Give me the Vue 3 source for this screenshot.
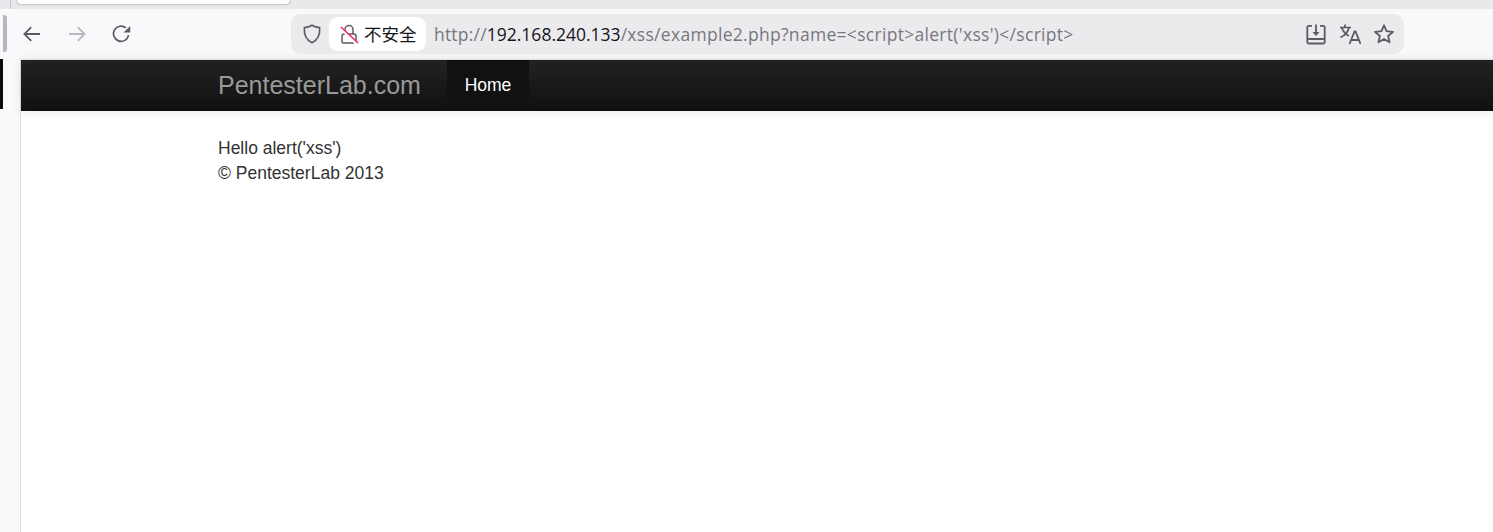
<script setup>
const urlHost = '192.168.240.133'
const urlPath = "/xss/example2.php?name=<script>alert('xss')</" + "script>"
</script>

<template>
  <div class="window">
    <div class="tabstrip">
      <span class="tab-sep"></span>
      <div class="tab"></div>
    </div>
    <header class="toolbar">
      <span class="handle"></span>
      <nav class="nav-buttons">
        <svg class="ico" viewBox="0 0 20 20" width="20" height="20"><path d="M18 10H2.6M9.2 3.2 2.4 10l6.8 6.8" fill="none" stroke="#5b5b66" stroke-width="1.8"/></svg>
        <svg class="ico" viewBox="0 0 20 20" width="20" height="20"><path d="M2 10h15.4M10.8 3.2l6.8 6.8-6.8 6.8" fill="none" stroke="#b9b9be" stroke-width="1.8"/></svg>
        <svg class="ico" viewBox="0 0 20 20" width="20" height="20"><path d="M16.6 11.2A7.6 7.6 0 1 1 14 3.9" fill="none" stroke="#5b5b66" stroke-width="1.7"/><path d="M18.2 2v6.6h-6.6z" fill="#5b5b66"/></svg>
      </nav>
      <div class="urlbar">
        <svg class="shield" viewBox="0 0 20 20" width="20" height="20"><path d="M10 1.3c2.4 1.5 4.800 2.100 7.600 2.300.6 7.400-1.800 12.300-7.600 15.100C4.200 15.900 1.800 11 2.400 3.600 5.200 3.400 7.600 2.800 10 1.300z" fill="none" stroke="#5b5b66" stroke-width="1.7"/></svg>
        <div class="pill">
          <svg class="lock" viewBox="0 0 20 20" width="20" height="20">
            <path d="M6 10V5.500a4 4 0 0 1 8 0V10" fill="none" stroke="#5b5b66" stroke-width="1.500"/>
            <rect x="3" y="10" width="14" height="9" rx="2" fill="none" stroke="#5b5b66" stroke-width="1.500"/>
            <path d="M2 4.800 18 20.500" stroke="#fff" stroke-width="2.500"/>
            <path d="M2 3 19 19" stroke="#f0325e" stroke-width="1.700"/>
          </svg>
          <span class="insecure">不安全</span>
        </div>
        <div class="url"><span class="dim scheme">http://</span><span class="host">{{ urlHost }}</span><span class="dim path">{{ urlPath }}</span></div>
        <div class="url-actions">
          <svg class="ico" viewBox="0 0 22 22" width="22" height="22"><path d="M7 2.800H3.800a1.500 1.500 0 0 0-1.500 1.500V19a1.500 1.500 0 0 0 1.500 1.500h14.400a1.500 1.500 0 0 0 1.500-1.500V4.300a1.500 1.500 0 0 0-1.500-1.500H15M2.500 16h17" fill="none" stroke="#5b5b66" stroke-width="1.800"/><path d="M11 1.500v8" stroke="#5b5b66" stroke-width="1.800"/><path d="M7.500 9h7L11 13z" fill="#5b5b66"/></svg>
          <svg class="ico" viewBox="0 0 22 22" width="22" height="22"><path d="M1 4.500h11M6 1.500v3M10 4.500C9 9 6 12.500 1.500 14.500M3 5c1 3.500 3.500 6 7 8" fill="none" stroke="#5b5b66" stroke-width="1.700"/><path d="M10.500 21 15.500 8.500h1L21.500 21M12.300 17h7.500" fill="none" stroke="#5b5b66" stroke-width="1.800"/></svg>
          <svg class="ico" viewBox="0 0 22 22" width="22" height="22"><path d="M11 2.300l2.500 5.900 6.500.6-4.900 4.200 1.500 6.300-5.600-3.400-5.600 3.400 1.500-6.300L2 8.800l6.500-.6z" fill="none" stroke="#5b5b66" stroke-width="1.800" stroke-linejoin="round"/></svg>
        </div>
      </div>
    </header>
    <div class="body-row">
      <aside class="sidebar"><span class="side-mark"></span></aside>
      <main class="page">
        <div class="navbar">
          <div class="container">
            <a class="brand">PentesterLab.com</a>
            <a class="home">Home</a>
          </div>
        </div>
        <div class="container content">
          <div>Hello alert('xss')</div>
          <footer>© PentesterLab 2013</footer>
        </div>
      </main>
    </div>
  </div>
</template>

<style>
html, body { margin: 0; background: #fff; overflow: hidden; }
</style>

<style scoped>
.window {
  width: 1493px;
  height: 532px;
  display: flex;
  flex-direction: column;
  overflow: hidden;
  font-family: "Liberation Sans", Arial, sans-serif;
}
.tabstrip {
  height: 9px;
  flex: none;
  display: flex;
  background: #e9e9ec;
  padding-left: 10px;
  box-sizing: border-box;
}
.tab-sep { width: 1px; height: 9px; background: #c4c4c8; }
.tab {
  width: 273px;
  height: 4px;
  margin-left: 6px;
  background: #fff;
  border-radius: 0 0 8px 8px;
  box-shadow: 0 0 2px rgba(0, 0, 0, 0.55);
}
.toolbar {
  height: 50px;
  flex: none;
  display: flex;
  align-items: center;
  background: #f9f9fb;
  box-sizing: border-box;
  padding-left: 3px;
}
.handle {
  width: 4px;
  height: 37px;
  background: #b7b7bb;
  border-radius: 0 3px 3px 0;
  align-self: flex-start;
  margin-top: 6px;
}
.nav-buttons {
  display: flex;
  gap: 25px;
  margin-left: 15px;
  width: 269px;
}
.ico { display: block; flex: none; }
.urlbar {
  width: 1113px;
  height: 40px;
  display: flex;
  align-items: center;
  background: #ebebee;
  border-radius: 10px;
  box-sizing: border-box;
  padding-left: 11px;
}
.pill {
  display: flex;
  align-items: center;
  flex: none;
  width: 97px;
  height: 34px;
  margin-left: 7px;
  padding-left: 10px;
  box-sizing: border-box;
  background: #fff;
  border-radius: 9px;
}
.insecure {
  margin-left: 5px;
  margin-bottom: 2px;
  font: 17.5px "Noto Sans CJK SC", sans-serif;
  color: #15141a;
  white-space: nowrap;
}
.url {
  margin-left: 8px;
  font: 17.5px "Open Sans", sans-serif;
  white-space: nowrap;
  width: 850px;
}
.dim { color: #77777e; }
.scheme { letter-spacing: 0.2px; }
.path { letter-spacing: 0.3px; }
.host { color: #15141a; }
.url-actions {
  display: flex;
  align-items: center;
  gap: 12px;
  margin-left: auto;
  padding-right: 9px;
}
.body-row {
  flex: 1;
  display: flex;
  min-height: 0;
}
.sidebar {
  width: 20px;
  flex: none;
  background: #f9f9fb;
  border-right: 1px solid #dcdce0;
}
.side-mark {
  display: block;
  width: 3px;
  height: 50px;
  background: #0b0b0b;
}
.page {
  flex: 1;
  min-width: 0;
  background: #fff;
  color: #333;
  font-size: 17.5px;
  line-height: 25px;
}
.navbar {
  height: 52px;
  box-sizing: border-box;
  border-top: 1px solid #e0e0e3;
  background: linear-gradient(#222, #111);
  box-shadow: 0 1px 10px rgba(0, 0, 0, 0.1);
}
.container {
  padding-left: 197px;
}
.navbar .container {
  display: flex;
  height: 100%;
}
.brand {
  width: 229px;
  font-size: 25px;
  line-height: 50px;
  color: #999;
  white-space: nowrap;
}
.home {
  width: 82px;
  text-align: center;
  line-height: 50px;
  color: #fff;
  background: #111;
}
.content {
  padding-top: 25px;
}
</style>
